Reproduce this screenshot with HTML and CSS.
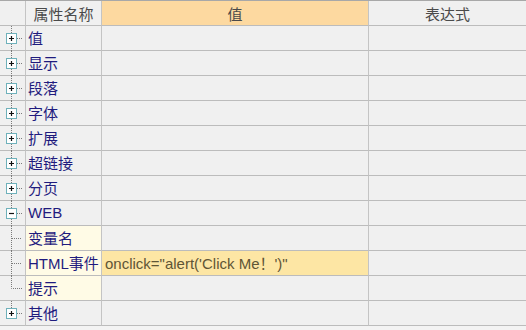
FILE: index.html
```html
<!DOCTYPE html>
<html>
<head>
<meta charset="utf-8">
<link rel="stylesheet" href="styles.css">
</head>
<body>
<div class="grid">
  <div class="hcell gut"></div>
  <div class="hcell">属性名称</div>
  <div class="hcell hval">值</div>
  <div class="hcell hexp">表达式</div>

  <div class="cell gut"><svg width="25" height="25" viewBox="0 0 25 25"><path class="dot" d="M11.5 0V7M17 12.5H22"/><rect class="box" x="6.5" y="7.5" width="10" height="10"/><path class="pm" d="M9 12.5H14M11.5 10V15"/><path class="dot" d="M11.5 18V25"/></svg></div>
  <div class="cell name">值</div><div class="cell val"></div><div class="cell exp"></div>

  <div class="cell gut"><svg width="25" height="25" viewBox="0 0 25 25"><path class="dot" d="M11.5 0V7M17 12.5H22M11.5 18V25"/><rect class="box" x="6.5" y="7.5" width="10" height="10"/><path class="pm" d="M9 12.5H14M11.5 10V15"/></svg></div>
  <div class="cell name">显示</div><div class="cell val"></div><div class="cell exp"></div>

  <div class="cell gut"><svg width="25" height="25" viewBox="0 0 25 25"><path class="dot" d="M11.5 0V7M17 12.5H22M11.5 18V25"/><rect class="box" x="6.5" y="7.5" width="10" height="10"/><path class="pm" d="M9 12.5H14M11.5 10V15"/></svg></div>
  <div class="cell name">段落</div><div class="cell val"></div><div class="cell exp"></div>

  <div class="cell gut"><svg width="25" height="25" viewBox="0 0 25 25"><path class="dot" d="M11.5 0V7M17 12.5H22M11.5 18V25"/><rect class="box" x="6.5" y="7.5" width="10" height="10"/><path class="pm" d="M9 12.5H14M11.5 10V15"/></svg></div>
  <div class="cell name">字体</div><div class="cell val"></div><div class="cell exp"></div>

  <div class="cell gut"><svg width="25" height="25" viewBox="0 0 25 25"><path class="dot" d="M11.5 0V7M17 12.5H22M11.5 18V25"/><rect class="box" x="6.5" y="7.5" width="10" height="10"/><path class="pm" d="M9 12.5H14M11.5 10V15"/></svg></div>
  <div class="cell name">扩展</div><div class="cell val"></div><div class="cell exp"></div>

  <div class="cell gut"><svg width="25" height="25" viewBox="0 0 25 25"><path class="dot" d="M11.5 0V7M17 12.5H22M11.5 18V25"/><rect class="box" x="6.5" y="7.5" width="10" height="10"/><path class="pm" d="M9 12.5H14M11.5 10V15"/></svg></div>
  <div class="cell name">超链接</div><div class="cell val"></div><div class="cell exp"></div>

  <div class="cell gut"><svg width="25" height="25" viewBox="0 0 25 25"><path class="dot" d="M11.5 0V7M17 12.5H22M11.5 18V25"/><rect class="box" x="6.5" y="7.5" width="10" height="10"/><path class="pm" d="M9 12.5H14M11.5 10V15"/></svg></div>
  <div class="cell name">分页</div><div class="cell val"></div><div class="cell exp"></div>

  <div class="cell gut"><svg width="25" height="25" viewBox="0 0 25 25"><path class="dot" d="M11.5 0V7M17 12.5H22M11.5 18V25"/><rect class="box" x="6.5" y="7.5" width="10" height="10"/><path class="pm" d="M9 12.5H14"/></svg></div>
  <div class="cell name">WEB</div><div class="cell val"></div><div class="cell exp"></div>

  <div class="cell gut"><svg width="25" height="25" viewBox="0 0 25 25"><path class="dot" d="M11.5 0V25M12 12.5H22"/></svg></div>
  <div class="cell name child">变量名</div><div class="cell val"></div><div class="cell exp"></div>

  <div class="cell gut"><svg width="25" height="25" viewBox="0 0 25 25"><path class="dot" d="M11.5 0V25M12 12.5H22"/></svg></div>
  <div class="cell name child">HTML事件</div><div class="cell val active">onclick="alert('Click Me！')"</div><div class="cell exp"></div>

  <div class="cell gut"><svg width="25" height="25" viewBox="0 0 25 25"><path class="dot" d="M11.5 0V12.5H22"/></svg></div>
  <div class="cell name child">提示</div><div class="cell val"></div><div class="cell exp"></div>

  <div class="cell gut"><svg width="25" height="25" viewBox="0 0 25 25"><path class="dot" d="M11.5 0V7M17 12.5H22"/><rect class="box" x="6.5" y="7.5" width="10" height="10"/><path class="pm" d="M9 12.5H14M11.5 10V15"/></svg></div>
  <div class="cell name">其他</div><div class="cell val"></div><div class="cell exp"></div>
</div>
</body>
</html>
```

FILE: styles.css
```css
html, body {
  margin: 0;
  padding: 0;
  background: #f3f3f3;
}
body {
  font-family: "Liberation Sans", "Noto Sans CJK SC", sans-serif;
  width: 526px;
  height: 330px;
  overflow: hidden;
}
.grid {
  display: grid;
  grid-template-columns: 26px 76px 267px 157px;
  grid-template-rows: 25px repeat(12, 25px);
  border-top: 1px solid #a8a8a8;
}
.hcell, .cell {
  box-sizing: border-box;
  border-right: 1px solid #c4c4c4;
  border-bottom: 1px solid #bcbcbc;
  background: #f0f0f0;
  display: flex;
  align-items: center;
  overflow: visible;
}
.hcell {
  justify-content: center;
  font-size: 15px;
  color: #4a4a4a;
}
.hval {
  background: #fdd9a0;
}
.hexp {
  border-right: none;
}
.cell {
  padding-bottom: 1px;
}
.cell.gut {
  position: relative;
}
.cell.gut svg {
  position: absolute;
  left: 0;
  top: 0;
}
.dot {
  fill: none;
  stroke: #7a7a7a;
  stroke-width: 1;
  stroke-dasharray: 1 1;
}
.box {
  fill: #ffffff;
  stroke: #6fb1bb;
  stroke-width: 1;
}
.pm {
  fill: none;
  stroke: #111;
  stroke-width: 1.2;
}
.name {
  padding-left: 2px;
  font-size: 15px;
  color: #1f1b7e;
  white-space: nowrap;
}
.child {
  background: #fffbe6;
}
.val {
  padding-left: 3px;
  font-size: 15px;
  color: #5f5536;
  white-space: nowrap;
}
.active {
  background: #fde6a4;
}
.exp {
  border-right: none;
}
```
